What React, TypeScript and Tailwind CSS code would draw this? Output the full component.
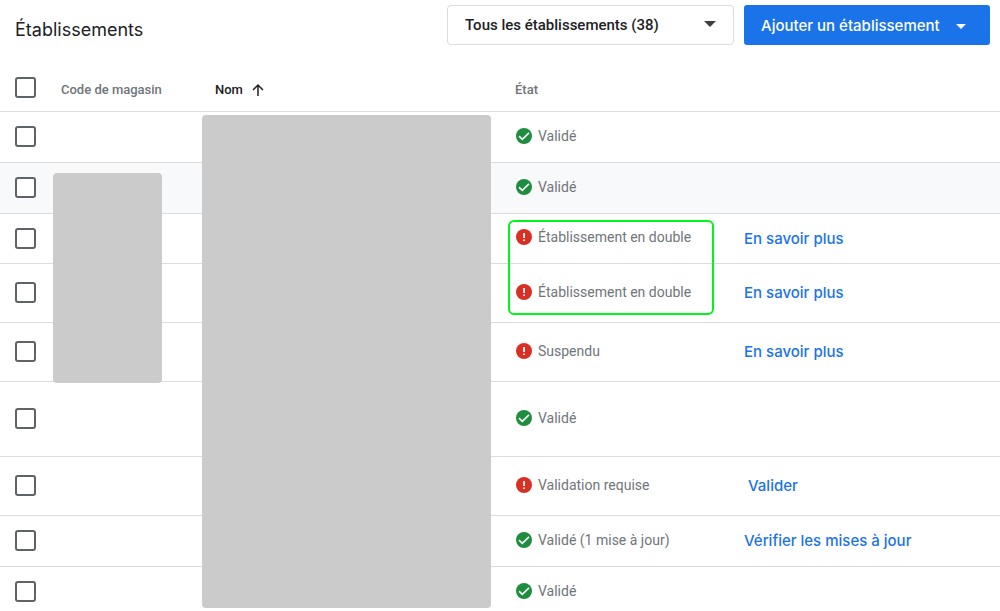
import React, { useState } from 'react';
import clsx from 'clsx';

type Status = 'ok' | 'error';

interface Location {
  id: number;
  status: Status;
  label: string;
  link?: string;
  action?: string;
  height: string;
}

const locations: Location[] = [
  { id: 1, status: 'ok', label: 'Validé', height: 'h-[51px]' },
  { id: 2, status: 'ok', label: 'Validé', height: 'h-[51px]' },
  { id: 3, status: 'error', label: 'Établissement en double', link: 'En savoir plus', height: 'h-[50px]' },
  { id: 4, status: 'error', label: 'Établissement en double', link: 'En savoir plus', height: 'h-[59px]' },
  { id: 5, status: 'error', label: 'Suspendu', link: 'En savoir plus', height: 'h-[59px]' },
  { id: 6, status: 'ok', label: 'Validé', height: 'h-[75px]' },
  { id: 7, status: 'error', label: 'Validation requise', action: 'Valider', height: 'h-[59px]' },
  { id: 8, status: 'ok', label: 'Validé (1 mise à jour)', link: 'Vérifier les mises à jour', height: 'h-[51px]' },
  { id: 9, status: 'ok', label: 'Validé', height: 'h-[51px]' }
];

const StatusIcon: React.FC<{ status: Status }> = ({ status }) => (
  <svg viewBox="0 0 16 16" className="size-4 shrink-0" aria-hidden="true">
    <circle cx="8" cy="8" r="8" fill={status === 'ok' ? '#1e8e3e' : '#d93025'} />
    {status === 'ok' ? (
      <path d="M3 8.1 6.3 11.4 13 4.9" fill="none" stroke="#fff" strokeWidth="1.5" />
    ) : (
      <path d="M7.2 4h1.7v5H7.2zM7.2 10.4h1.7V12H7.2z" fill="#fff" />
    )}
  </svg>
);

const Checkbox: React.FC<{ label: string; checked: boolean; onChange: () => void }> = ({
  label,
  checked,
  onChange
}) => (
  <input
    type="checkbox"
    aria-label={label}
    checked={checked}
    onChange={onChange}
    className="block size-[21px] appearance-none rounded-[3px] border-2 border-[#5f6368] bg-white checked:bg-[#1a73e8]"
  />
);

const App: React.FC = () => {
  const [selected, setSelected] = useState<number[]>([]);

  const allSelected = selected.length === locations.length;

  const toggleAll = () => {
    setSelected(allSelected ? [] : locations.map(l => l.id));
  };

  const toggle = (id: number) => {
    setSelected(prev => (prev.includes(id) ? prev.filter(x => x !== id) : [...prev, id]));
  };

  return (
    <main className="h-screen overflow-hidden bg-white font-['Roboto',sans-serif] text-[#202124]">
      <header className="flex items-start gap-2.5 pt-[5px] pr-2.5 pl-[15px]">
        <h1 className="grow pt-[11px] font-['Inter',sans-serif] text-lg leading-7">Établissements</h1>

        <div className="relative w-[287px]">
          <select
            aria-label="Filtrer les établissements"
            className="h-10 w-full appearance-none rounded border border-[#dadce0] bg-white pr-10 pl-[17px] text-[15px] font-medium"
          >
            <option>Tous les établissements (38)</option>
          </select>
          <svg
            viewBox="0 0 12 6"
            className="pointer-events-none absolute top-4 right-[18px] h-1.5 w-3"
            aria-hidden="true"
          >
            <path d="M0 0h12L6 6z" fill="#3c4043" />
          </svg>
        </div>

        <button
          type="button"
          className="flex h-10 w-[246px] items-center justify-between rounded-[3px] bg-[#1a73e8] pt-0.5 pr-6 pl-[17px] font-['Inter',sans-serif] text-[15px] font-medium text-white"
        >
          Ajouter un établissement
          <svg viewBox="0 0 10 5" className="h-[5px] w-2.5" aria-hidden="true">
            <path d="M0 0h10L5 5z" fill="currentColor" />
          </svg>
        </button>
      </header>

      <div className="relative">
        <table className="w-full table-fixed border-collapse text-left">
          <thead>
            <tr className="h-[66px] border-b border-[#dadce0] text-[13px] text-[#70757a]">
              <th className="w-[61px] pt-5 pl-[15px]">
                <Checkbox label="Tout sélectionner" checked={allSelected} onChange={toggleAll} />
              </th>
              <th className="w-[154px] pt-6 font-medium">Code de magasin</th>
              <th className="w-[300px] pt-6 font-medium text-[#202124]">
                <span className="flex items-center gap-2">
                  Nom
                  <svg viewBox="0 0 14 14" className="size-3.5" aria-hidden="true">
                    <path d="M7 13V2M2 7l5-5 5 5" fill="none" stroke="currentColor" strokeWidth="1.5" />
                  </svg>
                </span>
              </th>
              <th className="w-[229px] pt-6 font-medium">État</th>
              <th aria-label="Action" />
            </tr>
          </thead>
          <tbody>
            {locations.map(location => (
              <tr
                key={location.id}
                className={clsx(
                  'border-b border-[#dadce0]',
                  location.height,
                  location.id === 2 && 'bg-[#f8f9fa]'
                )}
              >
                <td className="pl-[15px]">
                  <Checkbox
                    label={`Sélectionner l'établissement ${location.id}`}
                    checked={selected.includes(location.id)}
                    onChange={() => toggle(location.id)}
                  />
                </td>
                <td />
                <td />
                <td className="pb-0.5 pl-px">
                  <span className="flex items-center gap-1.5 text-sm whitespace-nowrap text-[#70757a]">
                    <StatusIcon status={location.status} />
                    {location.label}
                  </span>
                </td>
                <td className="pt-0.5 font-['Inter',sans-serif] text-[15px] font-medium whitespace-nowrap text-[#1a73e8]">
                  {location.link && <a href="#">{location.link}</a>}
                  {location.action && (
                    <button type="button" className="px-1">
                      {location.action}
                    </button>
                  )}
                </td>
              </tr>
            ))}
          </tbody>
        </table>

        {/* masked store codes and names */}
        <div className="absolute top-32 left-[53px] h-[210px] w-[109px] rounded bg-[#cbcbcb]" />
        <div className="absolute top-[70px] left-[202px] h-[493px] w-[289px] rounded bg-[#cbcbcb]" />

        {/* highlight around the duplicates */}
        <div className="pointer-events-none absolute top-[175px] left-[508px] h-[95px] w-[206px] rounded-md border-2 border-[#00f51d]" />
      </div>
    </main>
  );
};

export default App;
